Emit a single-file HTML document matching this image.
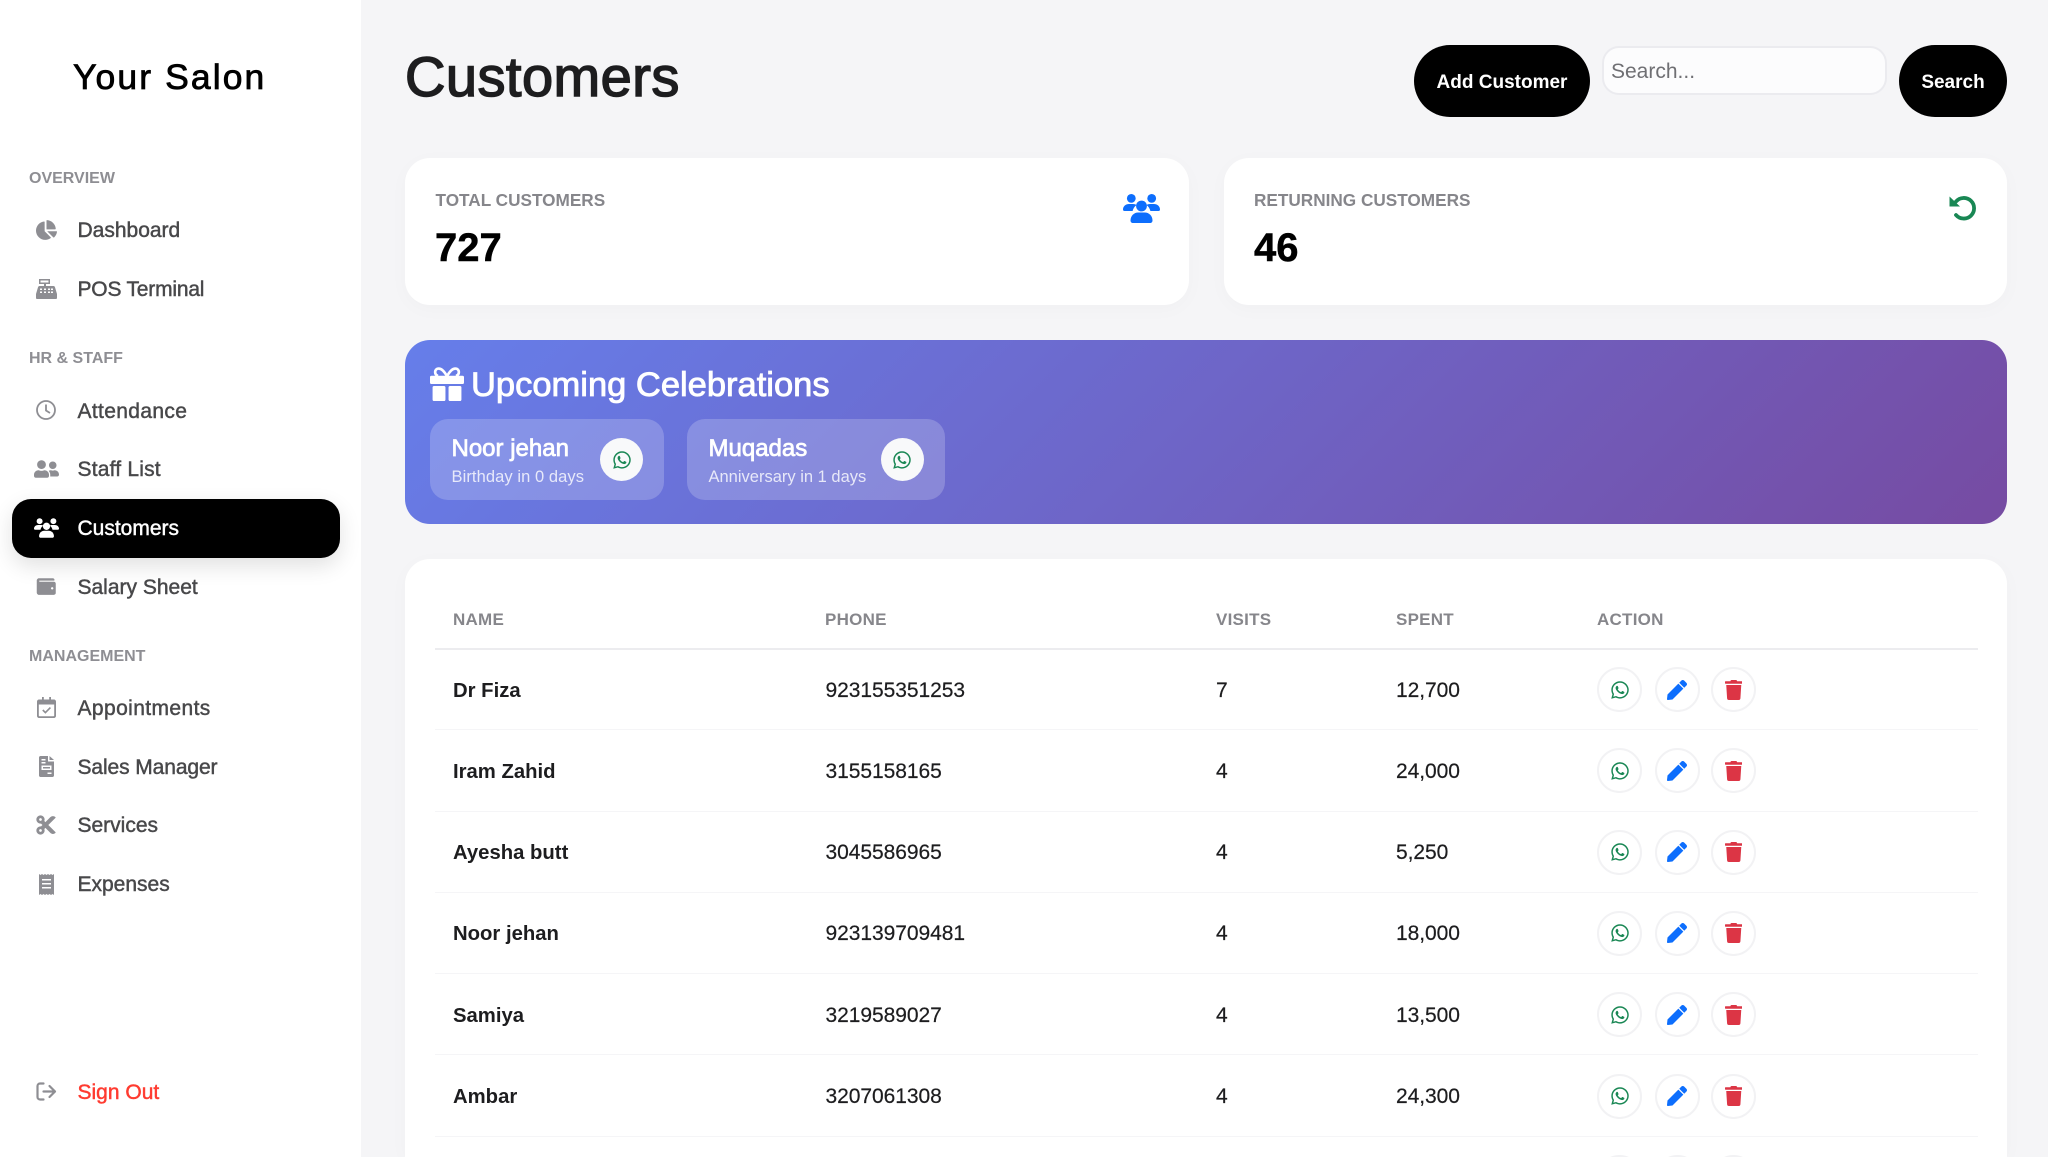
<!DOCTYPE html>
<html lang="en"><head><meta charset="utf-8"><title>Customers</title>
<style>
*{box-sizing:border-box;margin:0;padding:0}
html,body{width:2048px;height:1157px;overflow:hidden;background:#f5f5f7;font-family:"Liberation Sans",sans-serif}
#app{position:relative;width:2048px;height:1157px;overflow:hidden;background:#f5f5f7}
.t{position:absolute;line-height:1;white-space:nowrap}
.a{position:absolute}
svg{display:block;fill:currentColor}
aside{position:absolute;left:0;top:0;width:361px;height:1157px;background:#fff}
.lab{left:29px;font-size:16px;font-weight:700;color:#8e8e93;letter-spacing:0}
.it{left:77.5px;font-size:21px;color:#48484a;-webkit-text-stroke:.45px #48484a}
.ic{color:#8e8e93;position:absolute}
.pill{position:absolute;left:12px;top:499px;width:328px;height:58.5px;border-radius:19px;background:#000;box-shadow:0 8px 22px rgba(0,0,0,.12)}
.btn{position:absolute;background:#000;color:#fff;font-weight:700;font-size:19px;text-align:center;height:72px;top:45px;line-height:75px;border-radius:36px}
.card{position:absolute;background:#fff;border-radius:25px;box-shadow:0 4px 20px rgba(0,0,0,.025)}
.sl{font-size:17.2px;font-weight:700;color:#86868b;top:192px}
.sv{font-size:40px;font-weight:700;color:#000;top:228px;-webkit-text-stroke:.5px #000}
.banner{position:absolute;left:405px;top:340px;width:1602px;height:184px;border-radius:25px;background:linear-gradient(135deg,#667eea 0%,#764ba2 100%)}
.chip{position:absolute;top:79px;height:81px;border-radius:18px;background:rgba(255,255,255,.2)}
.cn{font-size:24px;color:#fff;-webkit-text-stroke:.75px #fff;top:18px;left:21.5px}
.cs{font-size:16.5px;color:rgba(255,255,255,.8);top:50px;left:21.5px}
.cb{position:absolute;top:19px;width:43px;height:43px;border-radius:50%;background:#f8f9fa;color:#198754}
.cb svg{position:absolute;left:12.5px;top:11.5px}
.table{position:absolute;left:405px;top:559px;width:1602px;height:598px;border-radius:25px 25px 0 0;background:#fff;box-shadow:0 4px 20px rgba(0,0,0,.025)}
.th{font-size:17px;font-weight:700;color:#86868b;top:611px;letter-spacing:.25px}
.hl{position:absolute;left:435px;width:1543px;top:648px;height:2px;background:#ececef}
.row{position:absolute;left:435px;width:1543px;height:81.3px;border-bottom:1px solid #f5f5f7}
.row.last{height:20.2px;border-bottom:0;overflow:hidden}
.row .t{top:30.5px;font-size:21px;color:#1d1d1f;-webkit-text-stroke:.2px #1d1d1f;letter-spacing:-.05px}
.row .n{left:18px;font-size:20.3px;font-weight:700;top:31.5px;-webkit-text-stroke:0;letter-spacing:0}
.row .p{left:390.5px}.row .v{left:781px}.row .s{left:961px}
.ab{position:absolute;top:18px;width:45px;height:45px;border-radius:50%;background:#fff;border:2px solid #f2f2f4}
.ab svg{position:absolute}
.w{left:1162px;color:#198754}.w svg{left:11.5px;top:10.5px}
.e{left:1219.5px;color:#0d6efd}.e svg{left:10.5px;top:10.5px}
.d{left:1275.5px;color:#dc3545}.d svg{left:12px;top:10.5px}
</style></head>
<body>
<svg width="0" height="0" style="position:absolute">
<defs>
<symbol id="wa" viewBox="0 0 448 512"><path d="M380.9 97.1C339 55.1 283.2 32 223.9 32c-122.4 0-222 99.6-222 222 0 39.1 10.2 77.3 29.6 111L0 480l117.7-30.9c32.4 17.7 68.9 27 106.1 27h.1c122.3 0 224.1-99.6 224.1-222 0-59.3-25.2-115-67.1-157zm-157 341.6c-33.2 0-65.7-8.9-94-25.7l-6.7-4-69.8 18.3L72 359.2l-4.4-7c-18.5-29.4-28.2-63.3-28.2-98.2 0-101.7 82.8-184.5 184.6-184.5 49.3 0 95.6 19.2 130.4 54.1 34.8 34.9 56.2 81.2 56.1 130.5 0 101.8-84.9 184.6-186.6 184.6zm101.2-138.2c-5.5-2.8-32.8-16.2-37.9-18-5.1-1.9-8.8-2.8-12.5 2.8-3.7 5.6-14.3 18-17.6 21.8-3.2 3.7-6.5 4.2-12 1.4-32.6-16.3-54-29.1-75.5-66-5.7-9.8 5.7-9.1 16.3-30.3 1.8-3.7.9-6.9-.5-9.7-1.4-2.8-12.5-30.1-17.1-41.2-4.5-10.8-9.1-9.3-12.5-9.5-3.2-.2-6.9-.2-10.6-.2-3.7 0-9.7 1.4-14.8 6.9-5.1 5.6-19.4 19-19.4 46.3 0 27.3 19.9 53.7 22.6 57.4 2.8 3.7 39.1 59.7 94.8 83.8 35.2 15.2 49 16.5 66.6 13.9 10.7-1.6 32.8-13.4 37.4-26.4 4.6-13 4.6-24.1 3.2-26.4-1.3-2.5-5-3.9-10.5-6.6z"/></symbol>
<symbol id="pen" viewBox="0 0 512 512"><path d="M290.74 93.24l128.02 128.02-277.99 277.99-114.14 12.6C11.35 513.54-1.56 500.62.14 485.34l12.7-114.22 277.9-277.88zm207.2-19.06l-60.11-60.11c-18.75-18.75-49.16-18.75-67.91 0l-56.55 56.55 128.02 128.02 56.55-56.55c18.75-18.76 18.75-49.16 0-67.91z"/></symbol>
<symbol id="tr" viewBox="0 0 448 512"><path d="M432 32H312l-9.4-18.7A24 24 0 0 0 281.1 0H166.8a23.72 23.72 0 0 0-21.4 13.3L136 32H16A16 16 0 0 0 0 48v32a16 16 0 0 0 16 16h416a16 16 0 0 0 16-16V48a16 16 0 0 0-16-16zM53.2 467a48 48 0 0 0 47.9 45h245.8a48 48 0 0 0 47.9-45L416 128H32z"/></symbol>
<symbol id="us" viewBox="0 0 37 29"><circle cx="18.5" cy="12" r="5.4"/><circle cx="8.3" cy="4.4" r="4.4"/><circle cx="28.7" cy="4.4" r="4.4"/><path d="M0 15.500C0 12.300 2.800 10 6 10h4c1.500 0 2.600.4 3.500 1-2 1.500-3.300 3.500-3.900 6H1.500C.6 17 0 16.400 0 15.500z"/><path d="M37 15.500C37 12.300 34.200 10 31 10h-4c-1.500 0-2.600.4-3.500 1 2 1.500 3.300 3.500 3.900 6h8.100c.9 0 1.500-.6 1.500-1.500z"/><path d="M7.500 26.500C7.500 21.500 11.500 18.500 15 18.500h7c3.500 0 7.500 3 7.500 8 0 1.500-1 2.500-2.500 2.500H10C8.500 29 7.500 28 7.500 26.500z"/></symbol>
</defs></svg>

<div id="app">
<aside>
<div class="t" style="left:73px;top:60px;font-size:35.5px;letter-spacing:2.1px;color:#000;-webkit-text-stroke:.8px #000">Your Salon</div>

<div class="t lab" style="top:171px">OVERVIEW</div>
<svg class="ic" style="left:36px;top:220px" width="21" height="20" viewBox="0 0 544 512"><path d="M527.79 288H290.5l158.03 158.03c6.04 6.04 15.98 6.53 22.19.68 38.7-36.46 65.32-85.61 73.13-140.86 1.34-9.46-6.51-17.85-16.06-17.85zm-15.83-64.8C503.72 103.74 408.26 8.28 288.8.04 279.68-.59 272 7.1 272 16.24V240h223.77c9.14 0 16.82-7.68 16.19-16.8zM224 288V50.71c0-9.55-8.39-17.4-17.84-16.06C86.99 51.49-4.1 155.6.14 280.37 4.5 408.51 114.83 513.59 243.03 511.98c50.4-.63 96.97-16.87 135.26-44.03 7.9-5.6 8.42-17.23 1.57-24.08L224 288z"/></svg>
<div class="t it" style="top:220px">Dashboard</div>
<svg class="ic" style="left:36px;top:279px" width="21" height="20" viewBox="0 0 21 20"><path fill-rule="evenodd" d="M3 0h11v5H10v2h7.500c.8 0 1.300.5 1.500 1.200L21 15v4c0 .6-.4 1-1 1H1c-.6 0-1-.4-1-1v-4l2-6.800C2.200 7.500 2.800 7 3.500 7H8V5H3zM4.500 1.500v2h8v-2zM4 9.500v1.500h2V9.500zM8 9.500v1.500h2V9.500zM12 9.500v1.500h2V9.500zM4 12.500v1.500h2v-1.500zM8 12.500v1.500h2v-1.500zM12 12.500v1.500h2v-1.500zM15 9.500v1.500h2V9.500zM15 12.500v1.500h2v-1.500z"/></svg>
<div class="t it" style="top:279px;letter-spacing:-.2px">POS Terminal</div>

<div class="t lab" style="top:351px">HR &amp; STAFF</div>
<svg class="ic" style="left:36px;top:400px" width="20" height="20" viewBox="0 0 20 20"><circle cx="10" cy="10" r="9" style="fill:none" stroke="#8e8e93" stroke-width="1.800"/><path d="M10 4.500V10.500L14 13" style="fill:none" stroke="#8e8e93" stroke-width="1.800"/></svg>
<div class="t it" style="top:400.5px;letter-spacing:.35px">Attendance</div>
<svg class="ic" style="left:34px;top:459px" width="25" height="20" viewBox="0 0 640 512"><path d="M192 256c61.900 0 112-50.100 112-112S253.900 32 192 32 80 82.100 80 144s50.100 112 112 112zm76.800 32h-8.300c-20.800 10-43.900 16-68.500 16s-47.600-6-68.500-16h-8.300C51.600 288 0 339.600 0 403.200V432c0 26.500 21.500 48 48 48h288c26.500 0 48-21.500 48-48v-28.800c0-63.600-51.600-115.200-115.200-115.200zM480 256c53 0 96-43 96-96s-43-96-96-96-96 43-96 96 43 96 96 96zm48 32h-3.800c-13.900 4.800-28.600 8-44.200 8s-30.300-3.200-44.200-8H432c-20.400 0-39.200 5.900-55.700 15.400 24.400 26.300 39.700 61.200 39.700 99.800v38.400c0 2.200-.5 4.300-.6 6.400H592c26.500 0 48-21.500 48-48 0-61.900-50.100-112-112-112z"/></svg>
<div class="t it" style="top:459px;letter-spacing:.2px">Staff List</div>

<div class="pill"></div>
<svg class="ic" style="left:34px;top:518px;color:#fff" width="25" height="20"><use href="#us"/></svg>
<div class="t it" style="top:517.5px;color:#fff;-webkit-text-stroke:.45px #fff">Customers</div>

<svg class="ic" style="left:36px;top:577px" width="20.500" height="19" viewBox="0 0 512 512"><path d="M461.200 128H80c-8.840 0-16-7.160-16-16s7.160-16 16-16h384c8.840 0 16-7.160 16-16 0-26.510-21.490-48-48-48H64C28.650 32 0 60.650 0 96v320c0 35.350 28.650 64 64 64h397.200c28.020 0 50.800-21.530 50.800-48V176c0-26.470-22.780-48-50.800-48zM416 336c-17.670 0-32-14.330-32-32s14.330-32 32-32 32 14.330 32 32-14.330 32-32 32z"/></svg>
<div class="t it" style="top:576.5px">Salary Sheet</div>

<div class="t lab" style="top:649px">MANAGEMENT</div>
<svg class="ic" style="left:37px;top:697px" width="19" height="21" viewBox="0 0 19 21"><path fill-rule="evenodd" d="M5 0h1.800v2.500h5.400V0H14v2.500h3c1.100 0 2 .9 2 2V19c0 1.100-.9 2-2 2H2c-1.100 0-2-.9-2-2V4.500c0-1.100.9-2 2-2h3zM1.800 7.500V18.500c0 .4.300.7.700.7h14c.4 0 .7-.3.7-.7V7.500z"/><path d="M5.800 13l2.600 2.600 5-5" style="fill:none" stroke="#8e8e93" stroke-width="1.600"/></svg>
<div class="t it" style="top:698px;letter-spacing:.4px">Appointments</div>
<svg class="ic" style="left:39px;top:756px" width="15" height="21" viewBox="0 0 15 21"><path fill-rule="evenodd" d="M1.500 0H9v5.500h6V19.500c0 .8-.7 1.500-1.500 1.500h-12C.7 21 0 20.300 0 19.500v-18C0 .7.700 0 1.500 0zM10.500 0L15 4h-4.500zM2.500 3v1.500h4V3zM2.500 6v1.500h4V6zM2.500 9.500V14h10V9.500zM4 11h7v1.500H4zM8.500 16.500V18h4v-1.500z"/></svg>
<div class="t it" style="top:757px;letter-spacing:-.1px">Sales Manager</div>
<svg class="ic" style="left:36px;top:814px" width="20" height="22" viewBox="0 0 448 512"><path d="M278.060 256L444.480 89.570c4.690-4.690 4.690-12.290 0-16.970-32.800-32.800-85.990-32.800-118.790 0L210.180 188.120l-24.860-24.860c4.310-10.920 6.680-22.810 6.680-35.260 0-53.020-42.980-96-96-96S0 74.980 0 128s42.980 96 96 96c4.540 0 8.990-.32 13.360-.93L142.290 256l-32.930 32.930c-4.370-.61-8.830-.93-13.360-.93-53.020 0-96 42.980-96 96s42.980 96 96 96 96-42.980 96-96c0-12.450-2.370-24.340-6.680-35.260l24.860-24.860L325.690 439.400c32.800 32.800 85.990 32.800 118.790 0 4.690-4.680 4.690-12.280 0-16.970L278.060 256zM96 160c-17.640 0-32-14.360-32-32s14.360-32 32-32 32 14.360 32 32-14.360 32-32 32zm0 256c-17.640 0-32-14.360-32-32s14.360-32 32-32 32 14.360 32 32-14.360 32-32 32z"/></svg>
<div class="t it" style="top:815px">Services</div>
<svg class="ic" style="left:39px;top:874px" width="15" height="21" viewBox="0 0 15 21"><path fill-rule="evenodd" d="M0 0l1.500 1L3 0l1.500 1L6 0l1.500 1L9 0l1.500 1L12 0l1.500 1L15 0v21l-1.500-1-1.500 1-1.500-1L9 21l-1.500-1L6 21l-1.500-1L3 21l-1.500-1L0 21zM3 5v1.500h9V5zM3 9v1.500h9V9zM3 13v1.500h9V13z"/></svg>
<div class="t it" style="top:873.5px">Expenses</div>

<svg class="ic" style="left:36px;top:1082px" width="21" height="19" viewBox="0 0 21 19"><path d="M7.500 1.500H4C2.600 1.500 1.500 2.600 1.500 4v11c0 1.400 1.100 2.500 2.500 2.500h3.500M7.500 9.500H19M13.500 4l5.500 5.500-5.500 5.500" style="fill:none" stroke="#8e8e93" stroke-width="2.200" stroke-linecap="round" stroke-linejoin="round"/></svg>
<div class="t it" style="top:1082px;color:#ff3b30;-webkit-text-stroke:.45px #ff3b30;font-size:21px">Sign Out</div>
</aside>

<div class="t" style="left:405px;top:49px;font-size:56px;letter-spacing:.45px;color:#1d1d1f;-webkit-text-stroke:1.500px #1d1d1f">Customers</div>
<div class="btn" style="left:1414px;width:176px">Add Customer</div>
<div class="a" style="left:1602px;top:46px;width:285px;height:49px;border-radius:17px;background:#fcfcfd;border:2px solid #ebebef"></div>
<div class="t" style="left:1611px;top:61px;font-size:21px;color:#6f6f73">Search...</div>
<div class="btn" style="left:1899px;width:108px">Search</div>

<div class="card" style="left:405px;top:158px;width:784px;height:147px"></div>
<div class="t sl" style="left:435.5px">TOTAL CUSTOMERS</div>
<div class="t sv" style="left:435px">727</div>
<svg class="a" style="left:1123px;top:194px;color:#0d6efd" width="37" height="29"><use href="#us"/></svg>

<div class="card" style="left:1224px;top:158px;width:783px;height:147px"></div>
<div class="t sl" style="left:1254px">RETURNING CUSTOMERS</div>
<div class="t sv" style="left:1254px">46</div>
<svg class="a" style="left:1949px;top:195px;color:#198754" width="28" height="26" viewBox="0 0 28 26"><path d="M.5 1.500V11.500H11z"/><path d="M7 6.500A10.300 10.300 0 1 1 7 20" style="fill:none" stroke="#198754" stroke-width="3.800" stroke-linecap="round"/></svg>

<div class="banner">
<svg class="a" style="left:25px;top:27px;color:#fff" width="34" height="34" viewBox="0 0 33 33"><rect x="0" y="8.500" width="33" height="8" rx="1.500"/><rect x="2.500" y="18.500" width="12.500" height="14.500" rx="1.500"/><rect x="18" y="18.500" width="12.500" height="14.500" rx="1.500"/><path d="M16.500 9C13.500 3.500 10.500 1.500 8.500 1.500 6 1.500 5 3.500 5 5s1 3.500 3 3.500M16.500 9C19.500 3.500 22.500 1.500 24.500 1.500 27 1.500 28 3.500 28 5s-1 3.500-3 3.500" style="fill:none" stroke="#fff" stroke-width="2.600"/></svg>
<div class="t" style="left:66px;top:28px;font-size:34.5px;color:#fff;-webkit-text-stroke:.85px #fff">Upcoming Celebrations</div>
<div class="chip" style="left:25px;width:234px">
<div class="t cn">Noor jehan</div><div class="t cs" style="letter-spacing:.08px">Birthday in 0 days</div>
<div class="cb" style="left:170px"><svg width="18" height="20"><use href="#wa"/></svg></div>
</div>
<div class="chip" style="left:282px;width:258px">
<div class="t cn">Muqadas</div><div class="t cs">Anniversary in 1 days</div>
<div class="cb" style="left:193.5px"><svg width="18" height="20"><use href="#wa"/></svg></div>
</div>
</div>

<div class="table"></div>
<div class="t th" style="left:453px">NAME</div>
<div class="t th" style="left:825px">PHONE</div>
<div class="t th" style="left:1216px">VISITS</div>
<div class="t th" style="left:1396px">SPENT</div>
<div class="t th" style="left:1597px">ACTION</div>
<div class="hl"></div>

<div class="row" style="top:649px"><div class="t n">Dr Fiza</div><div class="t p">923155351253</div><div class="t v">7</div><div class="t s">12,700</div><div class="ab w"><svg width="18" height="20"><use href="#wa"/></svg></div><div class="ab e"><svg width="20" height="20"><use href="#pen"/></svg></div><div class="ab d"><svg width="17.500" height="20"><use href="#tr"/></svg></div></div>
<div class="row" style="top:730.300px"><div class="t n">Iram Zahid</div><div class="t p">3155158165</div><div class="t v">4</div><div class="t s">24,000</div><div class="ab w"><svg width="18" height="20"><use href="#wa"/></svg></div><div class="ab e"><svg width="20" height="20"><use href="#pen"/></svg></div><div class="ab d"><svg width="17.500" height="20"><use href="#tr"/></svg></div></div>
<div class="row" style="top:811.600px"><div class="t n">Ayesha butt</div><div class="t p">3045586965</div><div class="t v">4</div><div class="t s">5,250</div><div class="ab w"><svg width="18" height="20"><use href="#wa"/></svg></div><div class="ab e"><svg width="20" height="20"><use href="#pen"/></svg></div><div class="ab d"><svg width="17.500" height="20"><use href="#tr"/></svg></div></div>
<div class="row" style="top:892.900px"><div class="t n">Noor jehan</div><div class="t p">923139709481</div><div class="t v">4</div><div class="t s">18,000</div><div class="ab w"><svg width="18" height="20"><use href="#wa"/></svg></div><div class="ab e"><svg width="20" height="20"><use href="#pen"/></svg></div><div class="ab d"><svg width="17.500" height="20"><use href="#tr"/></svg></div></div>
<div class="row" style="top:974.200px"><div class="t n">Samiya</div><div class="t p">3219589027</div><div class="t v">4</div><div class="t s">13,500</div><div class="ab w"><svg width="18" height="20"><use href="#wa"/></svg></div><div class="ab e"><svg width="20" height="20"><use href="#pen"/></svg></div><div class="ab d"><svg width="17.500" height="20"><use href="#tr"/></svg></div></div>
<div class="row" style="top:1055.500px"><div class="t n">Ambar</div><div class="t p">3207061308</div><div class="t v">4</div><div class="t s">24,300</div><div class="ab w"><svg width="18" height="20"><use href="#wa"/></svg></div><div class="ab e"><svg width="20" height="20"><use href="#pen"/></svg></div><div class="ab d"><svg width="17.500" height="20"><use href="#tr"/></svg></div></div>
<div class="row last" style="top:1136.800px"><div class="ab w"></div><div class="ab e"></div><div class="ab d"></div></div>
</div>
</body></html>
